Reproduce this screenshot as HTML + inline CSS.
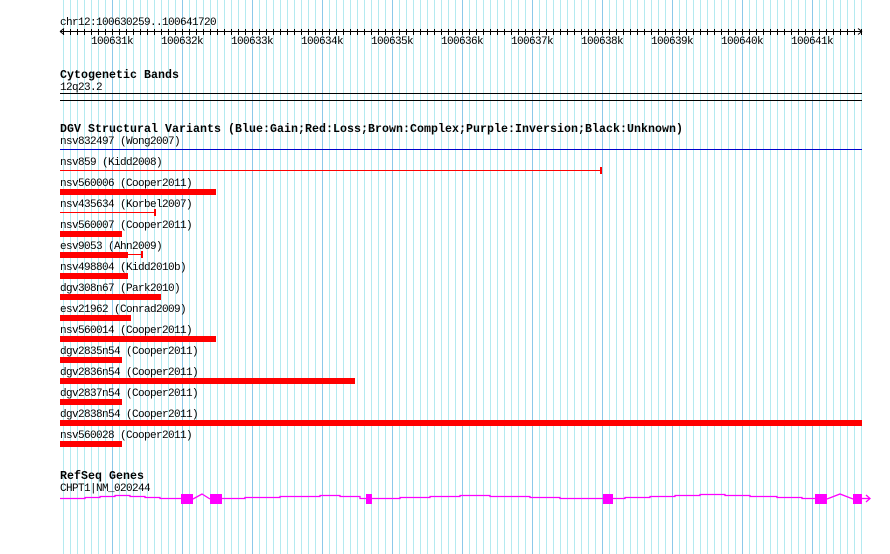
<!DOCTYPE html>
<html><head><meta charset="utf-8"><style>
html,body{margin:0;padding:0;background:#fff;}
svg{display:block;}
text{font-family:"Liberation Mono","DejaVu Sans Mono",monospace;font-size:11px;letter-spacing:-0.6px;fill:#000;}
.b{font-weight:bold;font-size:11.6px;letter-spacing:0;}
</style></head><body>
<svg width="890" height="554" xmlns="http://www.w3.org/2000/svg">
<defs>
<pattern id="g" x="63" y="0" width="70" height="554" patternUnits="userSpaceOnUse">
<rect x="0" width="1" height="554" fill="#b4eaf0"/>
<rect x="7" width="1" height="554" fill="#b4eaf0"/>
<rect x="14" width="1" height="554" fill="#b4eaf0"/>
<rect x="21" width="1" height="554" fill="#b4eaf0"/>
<rect x="28" width="1" height="554" fill="#b4eaf0"/>
<rect x="35" width="1" height="554" fill="#b4eaf0"/>
<rect x="42" width="1" height="554" fill="#b4eaf0"/>
<rect x="49" width="1" height="554" fill="#8cc8ea"/>
<rect x="56" width="1" height="554" fill="#b4eaf0"/>
<rect x="63" width="1" height="554" fill="#b4eaf0"/>
</pattern>
<pattern id="t" x="63" y="0" width="7" height="554" patternUnits="userSpaceOnUse">
<rect x="0" width="1" height="554" fill="#000"/>
</pattern>
</defs>
<rect x="60" y="0" width="802" height="554" fill="url(#g)"/>

<text x="60" y="25" textLength="156">chr12:100630259..100641720</text>
<rect x="60" y="31" width="802" height="1" fill="#000"/>
<rect x="60" y="29" width="802" height="6" fill="url(#t)"/>
<path d="M60 31.5 L64 28.5 M60 31.5 L64 34.5 M862 31.5 L858 28.5 M862 31.5 L858 34.5" stroke="#000" stroke-width="1" fill="none"/>
<g>
<text x="91" y="44">100631k</text>
<text x="161" y="44">100632k</text>
<text x="231" y="44">100633k</text>
<text x="301" y="44">100634k</text>
<text x="371" y="44">100635k</text>
<text x="441" y="44">100636k</text>
<text x="511" y="44">100637k</text>
<text x="581" y="44">100638k</text>
<text x="651" y="44">100639k</text>
<text x="721" y="44">100640k</text>
<text x="791" y="44">100641k</text>
</g>

<text class="b" x="60" y="78" textLength="119">Cytogenetic Bands</text>
<text x="60" y="90">12q23.2</text>
<rect x="60" y="93" width="802" height="1" fill="#000"/>
<rect x="60" y="100" width="802" height="1" fill="#000"/>

<text class="b" x="60" y="132" textLength="623">DGV Structural Variants (Blue:Gain;Red:Loss;Brown:Complex;Purple:Inversion;Black:Unknown)</text>
<text x="60" y="144">nsv832497 (Wong2007)</text>
<rect x="60" y="149" width="802" height="1" fill="#0000cc"/>
<text x="60" y="165">nsv859 (Kidd2008)</text>
<rect x="60" y="170" width="541" height="1" fill="#f00"/>
<rect x="600" y="167" width="2" height="7" fill="#f00"/>

<g fill="#f00">
<rect x="60" y="189" width="156" height="6"/>
<rect x="60" y="212" width="95" height="1"/>
<rect x="154" y="209" width="2" height="7"/>
<rect x="60" y="231" width="62" height="6"/>
<rect x="60" y="252" width="68" height="6"/>
<rect x="128" y="254" width="14" height="1"/>
<rect x="141" y="251" width="2" height="7"/>
<rect x="60" y="273" width="68" height="6"/>
<rect x="60" y="294" width="101" height="6"/>
<rect x="60" y="315" width="71" height="6"/>
<rect x="60" y="336" width="156" height="6"/>
<rect x="60" y="357" width="62" height="6"/>
<rect x="60" y="378" width="295" height="6"/>
<rect x="60" y="399" width="62" height="6"/>
<rect x="60" y="420" width="802" height="6"/>
<rect x="60" y="441" width="62" height="6"/>
</g>
<g>
<text x="60" y="186">nsv560006 (Cooper2011)</text>
<text x="60" y="207">nsv435634 (Korbel2007)</text>
<text x="60" y="228">nsv560007 (Cooper2011)</text>
<text x="60" y="249">esv9053 (Ahn2009)</text>
<text x="60" y="270">nsv498804 (Kidd2010b)</text>
<text x="60" y="291">dgv308n67 (Park2010)</text>
<text x="60" y="312">esv21962 (Conrad2009)</text>
<text x="60" y="333">nsv560014 (Cooper2011)</text>
<text x="60" y="354">dgv2835n54 (Cooper2011)</text>
<text x="60" y="375">dgv2836n54 (Cooper2011)</text>
<text x="60" y="396">dgv2837n54 (Cooper2011)</text>
<text x="60" y="417">dgv2838n54 (Cooper2011)</text>
<text x="60" y="438">nsv560028 (Cooper2011)</text>
</g>

<text class="b" x="60" y="479" textLength="84">RefSeq Genes</text>
<text x="60" y="491">CHPT1|NM_020244</text>
<g fill="none" stroke="#f0f" stroke-width="1.3">
<polyline points="60,498.5 85,498.5 85,497.5 100,497.5 100,496.5 115,496.5 115,495.5 130,495.5 130,496.5 145,496.5 145,497.5 160,497.5 160,498.5 181,498.5"/>
<polyline points="193,499 202,494 210,499"/>
<polyline points="222,498.5 245,498.5 245,497.5 280,497.5 280,496.5 320,496.5 320,495.5 340,495.5 340,496.5 360,496.5 360,498.5 366,498.5"/>
<polyline points="372,498.5 400,498.5 400,497.5 430,497.5 430,496.5 460,496.5 460,495.5 490,495.5 490,496.5 530,496.5 530,497.5 560,497.5 560,498.5 603,498.5"/>
<polyline points="613,498.5 625,498.5 625,497.5 650,497.5 650,496.5 675,496.5 675,495.5 700,495.5 700,494.5 725,494.5 725,495.5 750,495.5 750,496.5 777,496.5 777,497.5 802,497.5 802,498.5 815,498.5"/>
<polyline points="827,499 840,494 853,499"/>
<polyline points="862,498.5 870,498.5"/>
<polyline points="866,495 870,498.5 866,502"/>
</g>
<g fill="#f0f">
<rect x="181" y="494" width="12" height="10"/>
<rect x="210" y="494" width="12" height="10"/>
<rect x="366" y="494" width="6" height="10"/>
<rect x="603" y="494" width="10" height="10"/>
<rect x="815" y="494" width="12" height="10"/>
<rect x="853" y="494" width="9" height="10"/>
</g>
</svg>
</body></html>
